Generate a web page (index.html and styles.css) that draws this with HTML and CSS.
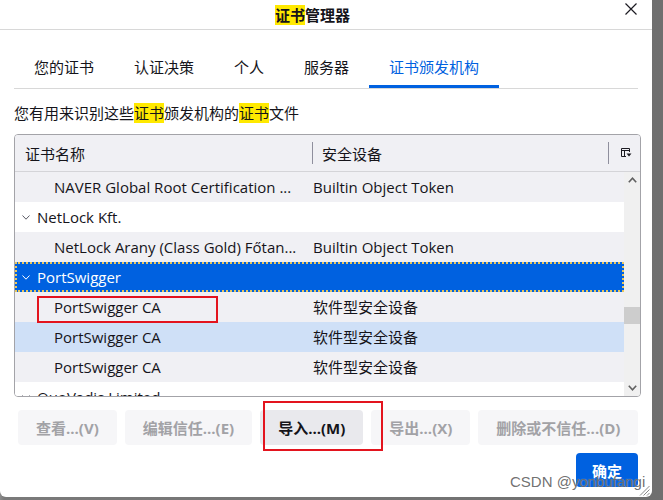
FILE: index.html
```html
<!DOCTYPE html>
<html lang="zh-CN">
<head>
<meta charset="utf-8">
<title>证书管理器</title>
<link rel="stylesheet" href="styles.css">
</head>
<body>
<div class="dialog">
  <header class="titlebar">
    <h1 class="title"><mark>证书</mark>管理器</h1>
    <button class="close" aria-label="关闭"><svg viewBox="0 0 12 12" width="12" height="12"><path d="M0.5 0.5 L11.5 11.5 M11.5 0.5 L0.5 11.5" stroke="#1c1b22" stroke-width="1.2" fill="none"/></svg></button>
  </header>
  <nav class="tabs">
    <div class="tab">您的证书</div>
    <div class="tab">认证决策</div>
    <div class="tab">个人</div>
    <div class="tab">服务器</div>
    <div class="tab active">证书颁发机构</div>
  </nav>
  <p class="desc">您有用来识别这些<mark>证书</mark>颁发机构的<mark>证书</mark>文件</p>
  <div class="tree">
    <div class="tree-head">
      <div class="hcell">证书名称</div>
      <div class="hsep"></div>
      <div class="hcell hcell2">安全设备</div>
      <div class="hsep"></div>
      <div class="hicon"><svg viewBox="0 0 11 9" width="11" height="9"><path d="M0.5 0.5 H8.5 V4 M0.5 0.5 V8.5 H5 M0.5 2.5 H8.5 M3.5 2.5 V8.5" stroke="#1c1b22" stroke-width="1" fill="none"/><path d="M5.5 5.5 H10.5 L8 8.5 Z" fill="#1c1b22"/></svg></div>
    </div>
    <div class="tree-body">
      <div class="rows">
        <div class="row child alt"><span class="c1">NAVER Global Root Certification ...</span><span class="c2">Builtin Object Token</span></div>
        <div class="row parent"><span class="c1"><svg class="twisty" viewBox="0 0 8 5" width="8" height="5"><path d="M0.5 0.5 L4 4.2 L7.5 0.5" stroke="#5b5b66" stroke-width="1" fill="none"/></svg>NetLock Kft.</span><span class="c2"></span></div>
        <div class="row child alt"><span class="c1">NetLock Arany (Class Gold) Főtan...</span><span class="c2">Builtin Object Token</span></div>
        <div class="row parent selected"><span class="c1"><svg class="twisty" viewBox="0 0 8 5" width="8" height="5"><path d="M0.5 0.5 L4 4.2 L7.5 0.5" stroke="#ffffff" stroke-width="1" fill="none"/></svg>PortSwigger</span><span class="c2"></span></div>
        <div class="row child alt"><span class="c1">PortSwigger CA</span><span class="c2">软件型安全设备</span></div>
        <div class="row child hover"><span class="c1">PortSwigger CA</span><span class="c2">软件型安全设备</span></div>
        <div class="row child alt"><span class="c1">PortSwigger CA</span><span class="c2">软件型安全设备</span></div>
        <div class="row parent"><span class="c1"><svg class="twisty" viewBox="0 0 8 5" width="8" height="5"><path d="M0.5 0.5 L4 4.2 L7.5 0.5" stroke="#5b5b66" stroke-width="1" fill="none"/></svg>QuoVadis Limited</span><span class="c2"></span></div>
      </div>
      <div class="scrollbar">
        <div class="sb-btn"><svg viewBox="0 0 9 6" width="9" height="6"><path d="M0.8 5.2 L4.5 1.2 L8.2 5.2" stroke="#606060" stroke-width="1.6" fill="none"/></svg></div>
        <div class="sb-track"><div class="sb-thumb"></div></div>
        <div class="sb-btn"><svg viewBox="0 0 9 6" width="9" height="6"><path d="M0.8 0.8 L4.5 4.8 L8.2 0.8" stroke="#606060" stroke-width="1.6" fill="none"/></svg></div>
      </div>
    </div>
  </div>
  <div class="actions">
    <button class="btn" disabled>查看...(V)</button>
    <button class="btn" disabled>编辑信任...(E)</button>
    <button class="btn btn-active">导入...(M)</button>
    <button class="btn" disabled>导出...(X)</button>
    <button class="btn" disabled>删除或不信任...(D)</button>
  </div>
  <div class="footer">
    <button class="primary">确定</button>
  </div>
  <div class="annot annot-ca"></div>
  <div class="annot annot-import"></div>
  <div class="watermark">CSDN @yonbufangi</div>
  <svg class="grip" viewBox="0 0 11 11" width="11" height="11"><path d="M10.5 1 L1 10.5 M10.5 4.5 L4.5 10.5 M10.5 8 L8 10.5" stroke="#8a8a8a" stroke-width="1" fill="none"/></svg>
</div>
</body>
</html>
```

FILE: styles.css
```css
html, body {
  margin: 0;
  padding: 0;
}
body {
  width: 663px;
  height: 500px;
  overflow: hidden;
  background: linear-gradient(90deg, #8c8c8c 0, #7a7a7a 4px, #6f6f6f 100%);
  font-family: "Open Sans", "Noto Sans CJK SC", sans-serif;
  color: #15141a;
}
.dialog {
  position: relative;
  width: 652px;
  height: 497px;
  background: #ffffff;
  border-radius: 0 0 6px 6px;
  overflow: hidden;
}
mark {
  background: #ffe900;
  color: inherit;
}
.titlebar {
  display: flex;
  align-items: center;
  height: 29px;
  border-bottom: 1px solid #d8d8d8;
}
.title {
  margin: 0 0 0 275px;
  font-size: 15px;
  font-weight: bold;
  line-height: 20px;
}
.close {
  margin-left: auto;
  margin-right: 15px;
  padding: 0;
  border: 0;
  background: none;
  display: flex;
  margin-top: -11px;
}
.tabs {
  display: flex;
  margin: 20px 14px 0;
  border-bottom: 1px solid #d8d8d8;
}
.tab {
  padding: 0 20px;
  height: 35px;
  line-height: 35px;
  font-size: 15px;
  border-bottom: 3px solid transparent;
}
.tab.active {
  color: #0061e0;
  border-bottom-color: #0061e0;
}
.desc {
  margin: 14px 14px 0;
  font-size: 15px;
  line-height: 20px;
}
.tree {
  margin: 11px 0 0 14px;
  width: 625px;
  border: 1px solid #a3a3a8;
  border-radius: 4px;
  overflow: hidden;
}
.tree-head {
  display: grid;
  grid-template-columns: 297px 1px 295px 1px 1fr;
  align-items: center;
  height: 36px;
  background: #f0f0f4;
  border-bottom: 1px solid #d4d4d8;
  font-size: 15px;
}
.hcell {
  padding-left: 10px;
}
.hcell2 {
  padding-left: 9px;
}
.hsep {
  height: 22px;
  background: #8f8f9d;
}
.hicon {
  padding-left: 12px;
  display: flex;
  margin-top: -2px;
}
.tree-body {
  display: flex;
  height: 224px;
  overflow: hidden;
}
.rows {
  width: 609px;
}
.row {
  display: grid;
  grid-template-columns: 298px 1fr;
  height: 30px;
  line-height: 30px;
  font-size: 15px;
  background: #ffffff;
  white-space: nowrap;
}
.row.alt {
  background: #f0f0f4;
}
.row.child .c1 {
  padding-left: 39px;
}
.row.parent .c1 {
  display: flex;
  align-items: center;
  padding-left: 7px;
}
.twisty {
  margin-right: 7px;
  margin-top: 1px;
}
.row.selected {
  background: #0061e0;
  color: #ffffff;
  outline: 2px dotted #e9c75e;
  outline-offset: -2px;
}
.row.hover {
  background: #cfe0f7;
}
.scrollbar {
  width: 16px;
  display: flex;
  flex-direction: column;
  background: #f0f0f0;
}
.sb-btn {
  height: 16px;
  display: flex;
  align-items: center;
  justify-content: center;
}
.sb-track {
  flex: 1;
}
.sb-thumb {
  margin-top: 119px;
  height: 17px;
  background: #cdcdcd;
}
.actions {
  display: flex;
  gap: 8px;
  margin: 13px 0 0 18px;
}
.btn {
  height: 35px;
  padding: 0 18px;
  border: 0;
  border-radius: 4px;
  background: #f6f6f8;
  color: #a2a2a6;
  font-family: "Open Sans", "Noto Sans CJK SC", sans-serif;
  font-size: 15px;
  font-weight: bold;
}
.btn-active {
  background: #e9e9ed;
  color: #15141a;
}
.footer {
  display: flex;
  justify-content: flex-end;
  margin: 8px 14px 0 0;
}
.primary {
  width: 62px;
  height: 34px;
  border: 0;
  border-radius: 4px;
  background: #0061e0;
  color: #ffffff;
  font-family: "Open Sans", "Noto Sans CJK SC", sans-serif;
  font-size: 15px;
  font-weight: bold;
}
.annot {
  position: absolute;
  border: 2px solid #e3141e;
  box-sizing: border-box;
}
.annot-ca {
  left: 37px;
  top: 296px;
  width: 181px;
  height: 27px;
}
.annot-import {
  left: 263px;
  top: 401px;
  width: 120px;
  height: 50px;
}
.watermark {
  position: absolute;
  left: 510px;
  top: 472px;
  font-family: "Liberation Sans", sans-serif;
  font-size: 15px;
  line-height: 20px;
  color: rgba(96, 96, 96, 0.9);
  text-shadow: 0 0 1px rgba(255, 255, 255, 0.6);
}
.grip {
  position: absolute;
  right: 2px;
  bottom: 1px;
}
```
